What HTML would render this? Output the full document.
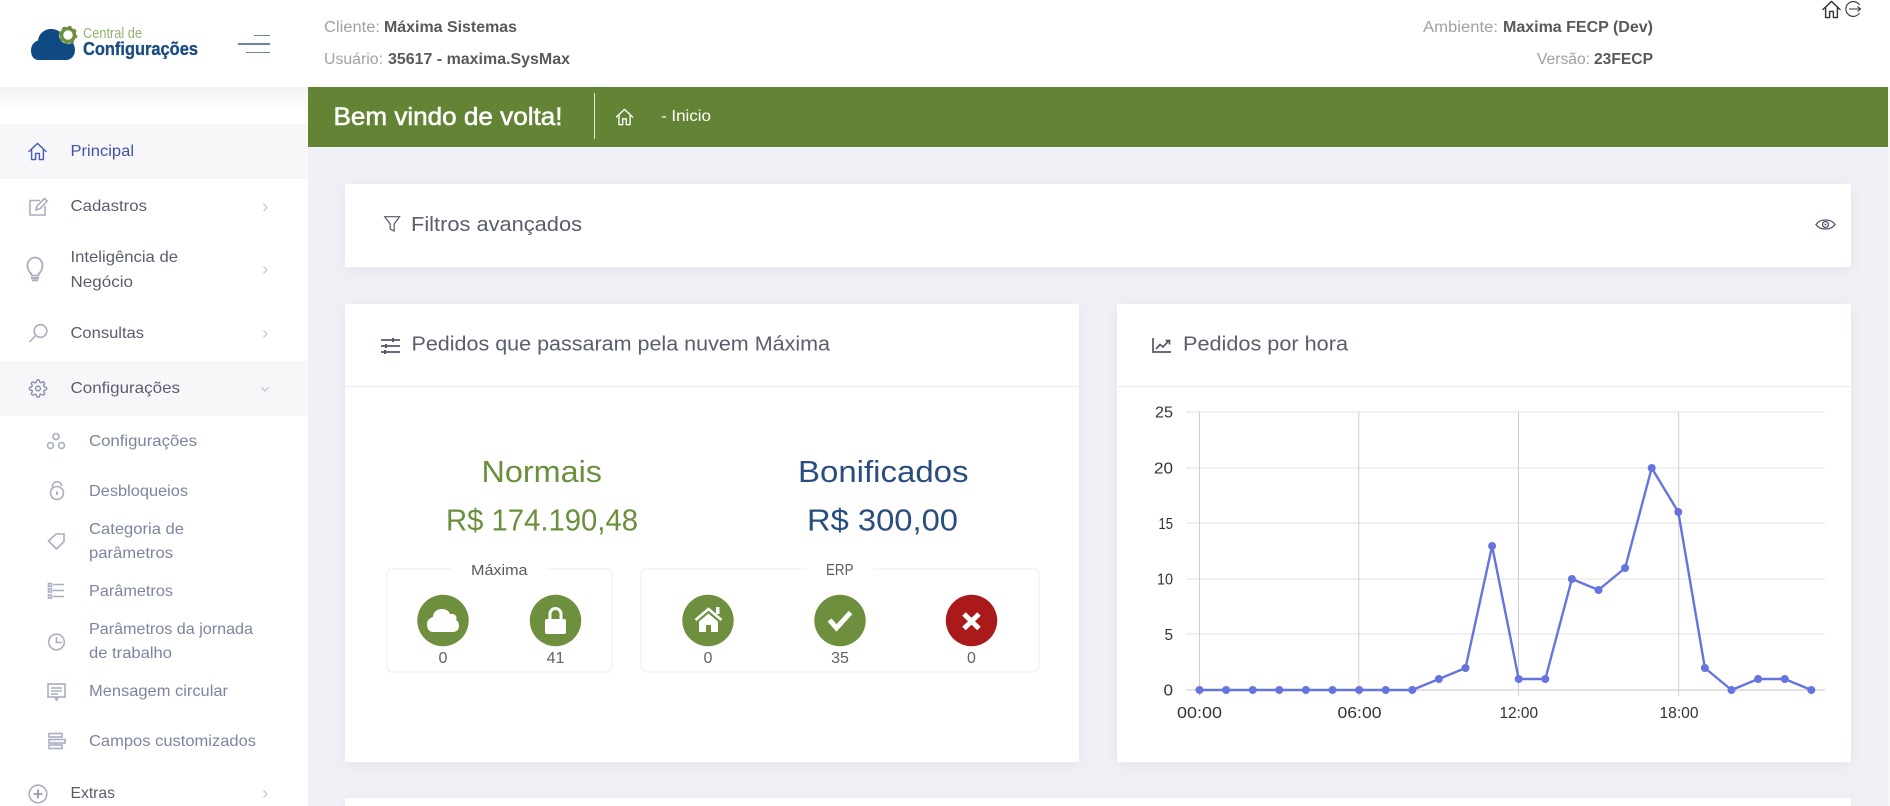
<!DOCTYPE html>
<html lang="pt-BR">
<head>
<meta charset="utf-8">
<title>Central de Configurações</title>
<style>
html,body{margin:0;padding:0;width:1890px;height:806px;overflow:hidden;background:#f0f1f6;font-family:"Liberation Sans",sans-serif}
#root{position:relative;width:1890px;height:806px;overflow:hidden}
.p{position:absolute}
.card{background:#fff;box-shadow:0 3px 14px rgba(82,63,105,.08)}
svg{position:absolute;left:0;top:0;display:block}
text{font-family:"Liberation Sans",sans-serif}
</style>
</head>
<body>
<div id="root">
<div class="p" style="left:0;top:0;width:308px;height:806px;background:#fff"></div>
<div class="p" style="left:0;top:87px;width:308px;height:24px;background:linear-gradient(#f1f1f4,#fff)"></div>
<div class="p" style="left:0;top:124px;width:308px;height:55px;background:#f7f7fa"></div>
<div class="p" style="left:0;top:361px;width:308px;height:55px;background:#f7f7fa"></div>
<div class="p" style="left:0;top:0;width:1890px;height:87px;background:#fff"></div>
<div class="p" style="left:308px;top:87px;width:1580px;height:60px;background:#648435"></div>
<div class="p" style="left:1888px;top:87px;width:2px;height:719px;background:#f7f7f9"></div>
<div class="p card" style="left:345px;top:184px;width:1506px;height:84px;border-bottom:1px solid #ecedf2;box-sizing:border-box"></div>
<div class="p card" style="left:345px;top:304px;width:734px;height:458px"></div>
<div class="p card" style="left:1117px;top:304px;width:734px;height:458px"></div>
<div class="p card" style="left:345px;top:798px;width:1506px;height:8px"></div>
<div class="p" style="left:345px;top:386px;width:734px;height:1px;background:#ecedf3"></div>
<div class="p" style="left:1117px;top:386px;width:734px;height:1px;background:#ecedf3"></div>

<svg width="1890" height="806" viewBox="0 0 1890 806" xmlns="http://www.w3.org/2000/svg">
<defs>
<symbol id="home" viewBox="0 0 20 20" overflow="visible">
<path d="M1 10 L10 1.5 L19 10 M3.8 8 V18.5 H8 V12 H12 V18.5 H16.2 V8" fill="none" stroke="currentColor" stroke-width="1.5" stroke-linejoin="round" stroke-linecap="round"/>
</symbol>
<symbol id="gear" viewBox="0 0 24 24" overflow="visible">
<circle cx="12" cy="12" r="3" fill="none" stroke="currentColor" stroke-width="1.8"/>
<path fill="none" stroke="currentColor" stroke-width="1.8" d="M19.4 15a1.65 1.65 0 0 0 .33 1.82l.06.06a2 2 0 0 1 0 2.83 2 2 0 0 1-2.83 0l-.06-.06a1.65 1.65 0 0 0-1.82-.33 1.65 1.65 0 0 0-1 1.51V21a2 2 0 0 1-2 2 2 2 0 0 1-2-2v-.09A1.65 1.65 0 0 0 9 19.4a1.65 1.65 0 0 0-1.82.33l-.06.06a2 2 0 0 1-2.83 0 2 2 0 0 1 0-2.83l.06-.06a1.65 1.65 0 0 0 .33-1.82 1.65 1.65 0 0 0-1.51-1H3a2 2 0 0 1-2-2 2 2 0 0 1 2-2h.09A1.65 1.65 0 0 0 4.6 9a1.65 1.65 0 0 0-.33-1.82l-.06-.06a2 2 0 0 1 0-2.83 2 2 0 0 1 2.83 0l.06.06a1.65 1.65 0 0 0 1.82.33H9a1.65 1.65 0 0 0 1-1.51V3a2 2 0 0 1 2-2 2 2 0 0 1 2 2v.09a1.65 1.65 0 0 0 1 1.51 1.65 1.65 0 0 0 1.82-.33l.06-.06a2 2 0 0 1 2.83 0 2 2 0 0 1 0 2.83l-.06.06a1.65 1.65 0 0 0-.33 1.82V9a1.65 1.65 0 0 0 1.51 1H21a2 2 0 0 1 2 2 2 2 0 0 1-2 2h-.09a1.65 1.65 0 0 0-1.51 1z"/>
</symbol>
</defs>

<!-- logo -->
<path d="M39 60 C33 60 31 55 31 50.5 C31 45 34.5 41.5 38 40.5 C39 33 45 29 51 29 C58 29 62 33 64 37 C71 38 75 44 75 50 C75 56 71 60 66 60 Z" fill="#0f4a82"/>
<circle cx="68" cy="35" r="8.8" fill="#fff"/>
<circle cx="68" cy="35" r="6.4" fill="none" stroke="#6d8f3e" stroke-width="3.4"/>
<circle cx="68" cy="35" r="8.2" fill="none" stroke="#6d8f3e" stroke-width="2.2" stroke-dasharray="3.2 3.24"/>
<text x="83" y="38" font-size="15" fill="#93b371" textLength="59" lengthAdjust="spacingAndGlyphs">Central de</text>
<text x="83" y="55" font-size="18" font-weight="700" fill="#1b4d84" stroke="#1b4d84" stroke-width=".35" textLength="115" lengthAdjust="spacingAndGlyphs">Configurações</text>

<!-- hamburger -->
<rect x="254" y="35" width="16" height="1" fill="#6b84a0"/>
<rect x="238" y="43" width="32" height="2" fill="#6b84a0"/>
<rect x="246" y="52" width="24" height="1" fill="#6b84a0"/>

<!-- header info -->
<g font-size="15.5">
<text x="324" y="32" fill="#a0a0a0" textLength="56" lengthAdjust="spacingAndGlyphs">Cliente:</text>
<text x="384" y="32" fill="#595959" font-weight="700" textLength="133" lengthAdjust="spacingAndGlyphs">Máxima Sistemas</text>
<text x="324" y="64" fill="#a0a0a0" textLength="59" lengthAdjust="spacingAndGlyphs">Usuário:</text>
<text x="388" y="64" fill="#595959" font-weight="700" textLength="182" lengthAdjust="spacingAndGlyphs">35617 - maxima.SysMax</text>
<text x="1423" y="32" fill="#a0a0a0" textLength="75" lengthAdjust="spacingAndGlyphs">Ambiente:</text>
<text x="1503" y="32" fill="#595959" font-weight="700" textLength="150" lengthAdjust="spacingAndGlyphs">Maxima FECP (Dev)</text>
<text x="1537" y="64" fill="#a0a0a0" textLength="53" lengthAdjust="spacingAndGlyphs">Versão:</text>
<text x="1594" y="64" fill="#595959" font-weight="700" textLength="59" lengthAdjust="spacingAndGlyphs">23FECP</text>
</g>
<use href="#home" x="1822" y="0" width="19" height="19" color="#333"/>
<path d="M1859.5 5 A7.4 7.4 0 1 0 1859.5 13 M1849 9 H1860.5 M1857.5 6.5 L1860.5 9 L1857.5 11.5" fill="none" stroke="#333" stroke-width="1.1"/>

<!-- green bar -->
<text x="333.5" y="125" font-size="25" fill="#fff" stroke="#fff" stroke-width=".55" textLength="229" lengthAdjust="spacingAndGlyphs">Bem vindo de volta!</text>
<rect x="594" y="93" width="1" height="46" fill="#dfe6d4"/>
<use href="#home" x="615.5" y="108" width="18" height="18" color="#fff"/>
<text x="661" y="121" font-size="16" fill="#fff" textLength="50" lengthAdjust="spacingAndGlyphs">- Inicio</text>

<!-- sidebar text -->
<g font-size="16" fill="#595d6e">
<text x="70.5" y="156" fill="#3f51a5" textLength="63.5" lengthAdjust="spacingAndGlyphs">Principal</text>
<text x="70.5" y="211" textLength="76.5" lengthAdjust="spacingAndGlyphs">Cadastros</text>
<text x="70.5" y="262" textLength="107.5" lengthAdjust="spacingAndGlyphs">Inteligência de</text>
<text x="70.5" y="287" textLength="62.5" lengthAdjust="spacingAndGlyphs">Negócio</text>
<text x="70.5" y="338" textLength="73.5" lengthAdjust="spacingAndGlyphs">Consultas</text>
<text x="70.5" y="393" textLength="109.5" lengthAdjust="spacingAndGlyphs">Configurações</text>
<text x="70.5" y="798" textLength="44.5" lengthAdjust="spacingAndGlyphs">Extras</text>
</g>
<g font-size="16" fill="#7d84a0">
<text x="89" y="446" textLength="108" lengthAdjust="spacingAndGlyphs">Configurações</text>
<text x="89" y="496" textLength="99" lengthAdjust="spacingAndGlyphs">Desbloqueios</text>
<text x="89" y="534" textLength="95" lengthAdjust="spacingAndGlyphs">Categoria de</text>
<text x="89" y="558" textLength="84" lengthAdjust="spacingAndGlyphs">parâmetros</text>
<text x="89" y="596" textLength="84" lengthAdjust="spacingAndGlyphs">Parâmetros</text>
<text x="89" y="634" textLength="164" lengthAdjust="spacingAndGlyphs">Parâmetros da jornada</text>
<text x="89" y="658" textLength="83" lengthAdjust="spacingAndGlyphs">de trabalho</text>
<text x="89" y="696" textLength="139" lengthAdjust="spacingAndGlyphs">Mensagem circular</text>
<text x="89" y="746" textLength="167" lengthAdjust="spacingAndGlyphs">Campos customizados</text>
</g>

<!-- sidebar icons -->
<use href="#home" x="28" y="142" width="19" height="19" color="#4a5db8"/>
<g fill="none" stroke="#a9adc0" stroke-width="1.6">
<path d="M40 200.5 H30 V215 H45 V206"/>
<path d="M36 210 L37 206 L44.5 198.5 L47.2 201 L40 208.8 Z"/>
<path d="M31.5 274 C28.5 271.5 27.5 269 27.5 265.5 C27.5 260.8 31 257.5 35 257.5 C39 257.5 42.5 260.8 42.5 265.5 C42.5 269 41.5 271.5 38.5 274 V275.5 H31.5 Z" stroke-width="1.8"/>
<circle cx="40.5" cy="331" r="6.3" stroke-width="1.6"/>
<path d="M35.8 335.5 L29.5 342"/>
</g>
<rect x="31" y="277" width="8" height="2.2" fill="#a9adc0"/><rect x="32" y="279.5" width="6" height="1.8" fill="#a9adc0"/>
<use href="#gear" x="28.5" y="379" width="19" height="19" color="#8a8fa8"/>
<g fill="none" stroke="#a9adc0" stroke-width="1.6">
<circle cx="56" cy="436.5" r="3"/><circle cx="50.5" cy="445.5" r="3"/><circle cx="61.5" cy="445.5" r="3"/>
<circle cx="57" cy="493" r="6.5"/>
<path d="M52.5 488.5 V486.5 A4.5 4.5 0 0 1 61.5 486"/>
<path d="M57 491.5 V495" stroke-width="2"/>
<path d="M48.5 541 L56 534 H64 V541.5 L56.5 549 Z"/>
<circle cx="56.5" cy="642" r="7.8"/>
<path d="M56.5 637 V642.5 H62"/>
<rect x="48" y="684" width="17" height="13"/>
<path d="M51 688 H62 M51 691 H62 M51 694 H58 M55 697 L56.5 700 L58.5 697"/>
<path d="M53 584.5 H64 M53 590.5 H64 M53 596.5 H64"/>
<rect x="48.5" y="583.5" width="3" height="3"/><rect x="48.5" y="589" width="3" height="3"/><rect x="48.5" y="595" width="3" height="3"/>
<rect x="49" y="733.5" width="13" height="3.5"/><rect x="49" y="739.5" width="16" height="3.5"/><rect x="49" y="745" width="13" height="3.5"/>
<circle cx="38" cy="794" r="8.8"/>
<path d="M38 789.5 V798.5 M33.5 794 H42.5" stroke="#8a8fa8"/>
</g>
<!-- chevrons -->
<g fill="none" stroke="#b4b7c6" stroke-width="1">
<path d="M263.5 204 L267 207.5 L263.5 211"/>
<path d="M263.5 266.5 L267 270 L263.5 273.5"/>
<path d="M263.5 330.5 L267 334 L263.5 337.5"/>
<path d="M261.5 387.5 L265 391 L268.5 387.5"/>
<path d="M263.5 790.5 L267 794 L263.5 797.5"/>
</g>

<!-- filter card -->
<path d="M384.7 216.7 H399.6 L394.2 224 V231 L390.2 229 V224 Z" fill="none" stroke="#55586a" stroke-width="1.2"/>
<text x="411" y="231" font-size="20" fill="#595d6e" textLength="171" lengthAdjust="spacingAndGlyphs">Filtros avançados</text>
<path d="M1816 224.5 C1820 218.5 1831 218.5 1835 224.5 C1831 230.5 1820 230.5 1816 224.5 Z" fill="none" stroke="#55586a" stroke-width="1.3"/>
<circle cx="1825.5" cy="224.5" r="3" fill="none" stroke="#55586a" stroke-width="1.3"/>
<circle cx="1825.5" cy="224.5" r="1" fill="#55586a"/>

<!-- left card -->
<g stroke="#55586a" stroke-width="1.8">
<path d="M381 340 H400 M381 346 H400 M381 352 H400"/>
<path d="M393 338 V342 M386 344 V348 M385 350 V354" stroke-width="2"/>
</g>
<text x="411.5" y="350.5" font-size="20" fill="#595d6e" textLength="418.5" lengthAdjust="spacingAndGlyphs">Pedidos que passaram pela nuvem Máxima</text>

<text x="481.5" y="482" font-size="31" fill="#6a8f3d" textLength="120.5" lengthAdjust="spacingAndGlyphs">Normais</text>
<text x="798" y="482" font-size="31" fill="#2a4d80" textLength="170.5" lengthAdjust="spacingAndGlyphs">Bonificados</text>
<text x="446" y="530.5" font-size="31" fill="#6a8f3d" textLength="192" lengthAdjust="spacingAndGlyphs">R$ 174.190,48</text>
<text x="807" y="530.5" font-size="31" fill="#2a4d80" textLength="151" lengthAdjust="spacingAndGlyphs">R$ 300,00</text>

<!-- fieldsets -->
<path d="M452 569 H392 A5 5 0 0 0 387 574 V667 A5 5 0 0 0 392 672 H607 A5 5 0 0 0 612 667 V574 A5 5 0 0 0 607 569 H546" fill="none" stroke="#eeeef1"/>
<path d="M806.5 569 H646 A5 5 0 0 0 641 574 V667 A5 5 0 0 0 646 672 H1034 A5 5 0 0 0 1039 667 V574 A5 5 0 0 0 1034 569 H873" fill="none" stroke="#eeeef1"/>
<text x="471" y="575" font-size="15" fill="#5a5a5f" textLength="56.5" lengthAdjust="spacingAndGlyphs">Máxima</text>
<text x="826" y="575" font-size="16" fill="#5a5a5f" textLength="27.5" lengthAdjust="spacingAndGlyphs">ERP</text>

<circle cx="443" cy="620.5" r="25.7" fill="#6d8f3e"/>
<circle cx="555.5" cy="620.5" r="25.7" fill="#6d8f3e"/>
<circle cx="708" cy="620.5" r="25.7" fill="#6d8f3e"/>
<circle cx="840" cy="620.5" r="25.7" fill="#6d8f3e"/>
<circle cx="971.5" cy="620.5" r="25.7" fill="#ab1a1a"/>

<path d="M433 632 C428 632 427 627 427 624 C427 620 430 618 433 617 C433 612 437 609 442 609 C446 609 449 611 450 614 C455 613 458 617 456 620 C458 621 459 623 459 626 C459 630 456 632 453 632 Z" fill="#fff"/>
<rect x="545" y="619" width="21" height="15" rx="2" fill="#fff"/>
<path d="M550 620 V614 A5.5 5.5 0 0 1 561 614 V620" fill="none" stroke="#fff" stroke-width="3"/>
<path d="M695.5 620 L708.5 609 L721.5 620" fill="none" stroke="#fff" stroke-width="2.6"/>
<rect x="716" y="607" width="3.5" height="7" fill="#fff"/>
<path d="M699 621.5 L708.5 613.5 L718 621.5 V632 H711 V625 H706 V632 H699 Z" fill="#fff"/>
<path d="M829.5 620 L836.5 628 L850.5 612.5" fill="none" stroke="#fff" stroke-width="5"/>
<path d="M964 614 L979 628.5 M979 614 L964 628.5" fill="none" stroke="#fff" stroke-width="5"/>

<g font-size="16" fill="#606066" text-anchor="middle">
<text x="443" y="663">0</text><text x="555.5" y="663">41</text>
<text x="708" y="663">0</text><text x="840" y="663">35</text><text x="971.5" y="663">0</text>
</g>

<!-- right card -->
<path d="M1153 338 V352 H1171 M1156 349 L1160 344.5 L1163 347 L1169 340.5 M1165.5 340.5 H1169.5 V344.5" fill="none" stroke="#55586a" stroke-width="1.7"/>
<text x="1183" y="350.5" font-size="20" fill="#595d6e" textLength="165" lengthAdjust="spacingAndGlyphs">Pedidos por hora</text>

<!-- chart -->
<g stroke="#e6e6e6" stroke-width="1.3">
<path d="M1186 412 H1825 M1186 468 H1825 M1186 523 H1825 M1186 579 H1825 M1186 634 H1825"/>
<path d="M1186 690 H1825" stroke="#d0d0d0"/>
</g>
<g stroke="#cfcfd3" stroke-width="1">
<path d="M1199.5 412 V696 M1358.8 412 V696 M1518.5 412 V696 M1678.6 412 V696"/>
</g>
<g font-size="16" fill="#333">
<text x="1155" y="417.5" textLength="18" lengthAdjust="spacingAndGlyphs">25</text>
<text x="1154" y="473.5" textLength="19" lengthAdjust="spacingAndGlyphs">20</text>
<text x="1158.5" y="529" textLength="14.5" lengthAdjust="spacingAndGlyphs">15</text>
<text x="1157" y="584.5" textLength="16" lengthAdjust="spacingAndGlyphs">10</text>
<text x="1164.5" y="640" textLength="8.5" lengthAdjust="spacingAndGlyphs">5</text>
<text x="1163.5" y="695.5" textLength="9.5" lengthAdjust="spacingAndGlyphs">0</text>
<text x="1177" y="718" textLength="45" lengthAdjust="spacingAndGlyphs">00:00</text>
<text x="1337.5" y="718" textLength="44" lengthAdjust="spacingAndGlyphs">06:00</text>
<text x="1499.5" y="718" textLength="38.5" lengthAdjust="spacingAndGlyphs">12:00</text>
<text x="1659.5" y="718" textLength="39" lengthAdjust="spacingAndGlyphs">18:00</text>
</g>
<polyline fill="none" stroke="#6574de" stroke-width="2.4" stroke-linejoin="round" points="1199.5,690 1226.1,690 1252.7,690 1279.3,690 1305.9,690 1332.5,690 1359.1,690 1385.7,690 1412.3,690 1438.9,679 1465.5,668 1492.1,546 1518.7,679 1545.3,679 1571.9,579 1598.5,590 1625.1,568 1651.7,468 1678.3,512 1704.9,668 1731.5,690 1758.1,679 1784.7,679 1811.3,690"/>
<g fill="#6574de">
<circle cx="1199.5" cy="690" r="4"/><circle cx="1226.1" cy="690" r="4"/><circle cx="1252.7" cy="690" r="4"/><circle cx="1279.3" cy="690" r="4"/><circle cx="1305.9" cy="690" r="4"/><circle cx="1332.5" cy="690" r="4"/><circle cx="1359.1" cy="690" r="4"/><circle cx="1385.7" cy="690" r="4"/><circle cx="1412.3" cy="690" r="4"/><circle cx="1438.9" cy="679" r="4"/><circle cx="1465.5" cy="668" r="4"/><circle cx="1492.1" cy="546" r="4"/><circle cx="1518.7" cy="679" r="4"/><circle cx="1545.3" cy="679" r="4"/><circle cx="1571.9" cy="579" r="4"/><circle cx="1598.5" cy="590" r="4"/><circle cx="1625.1" cy="568" r="4"/><circle cx="1651.7" cy="468" r="4"/><circle cx="1678.3" cy="512" r="4"/><circle cx="1704.9" cy="668" r="4"/><circle cx="1731.5" cy="690" r="4"/><circle cx="1758.1" cy="679" r="4"/><circle cx="1784.7" cy="679" r="4"/><circle cx="1811.3" cy="690" r="4"/>
</g>
</svg>
</div>
</body>
</html>
